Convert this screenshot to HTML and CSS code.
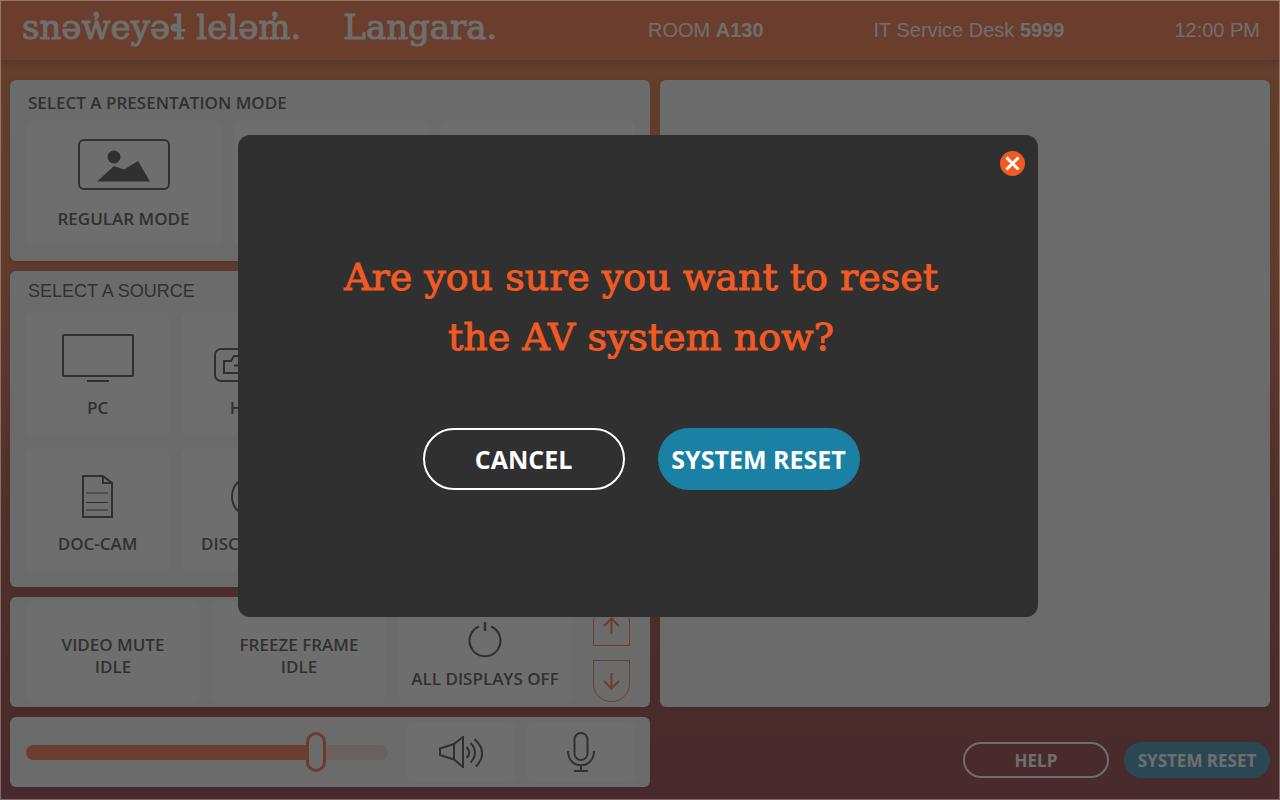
FILE: index.html
```html
<!doctype html>
<html lang="en">

<head>
  <meta charset="utf-8">
  <title>Langara AV Control - Room A130</title>
  <meta name="viewport" content="width=device-width, initial-scale=1.0">
  <link rel="stylesheet" href="styles.css">
</head>

<body>
  <div class="screen">
    <header class="header">
      <div class="brand">
        <span>snəw̓eyəɬ leləm̓.</span>
        <span>Langara.</span>
      </div>
      <div class="info">
        <span>ROOM <b>A130</b></span>
        <span>IT Service Desk <b>5999</b></span>
        <span>12:00 PM</span>
      </div>
    </header>

    <main class="main">
      <section class="panel modes">
        <h2 class="heading">SELECT A PRESENTATION MODE</h2>
        <div class="tiles tiles_3">
          <button class="tile tile_mode">
            <svg width="92" height="52" viewBox="0 0 92 52">
              <rect x="1" y="2" width="90" height="49" rx="5" fill="none" stroke="#303030" stroke-width="2"/>
              <circle cx="36" cy="19" r="6.5" fill="#303030"/>
              <path d="M19 43.500 L36 28 L46 31.500 L60 23 L72 43.500 Z" fill="#303030"/>
            </svg>
            REGULAR MODE
          </button>
          <div class="tile tile_mode"></div>
          <div class="tile tile_mode"></div>
        </div>
      </section>

      <section class="panel sources">
        <h2 class="heading heading_alt">SELECT A SOURCE</h2>
        <div class="tiles tiles_4">
          <button class="tile tile_source">
            <svg width="72" height="49" viewBox="0 0 72 49" fill="none" stroke="#303030" stroke-width="2">
              <rect x="1" y="2" width="70" height="41" rx="1"/>
              <path d="M25 48 H47"/>
            </svg>
            PC
          </button>
          <button class="tile tile_source">
            <svg width="78" height="34" viewBox="0 0 78 34" fill="none" stroke="#303030" stroke-width="2">
              <rect x="1" y="1" width="76" height="32" rx="6"/>
              <path d="M10 25 V13 H17 L20 8 H58 L61 13 H68 V25 Z M20 17.500 H58"/>
            </svg>
            HDMI
          </button>
          <div class="tile tile_source"></div>
          <div class="tile tile_source"></div>
          <button class="tile tile_source">
            <svg width="31" height="43" viewBox="0 0 31 43" fill="none" stroke="#303030" stroke-width="2">
              <path d="M1 1 H21 L30 8 V42 H1 Z M21 1 V8 H30"/>
              <path d="M4 18 H26 M4 27.500 H26 M4 35 H26" stroke-width="1"/>
            </svg>
            DOC-CAM
          </button>
          <button class="tile tile_source">
            <svg width="43" height="43" viewBox="0 0 43 43" fill="none" stroke="#303030" stroke-width="2">
              <circle cx="21.500" cy="21.500" r="20.500"/>
              <circle cx="21.500" cy="21.500" r="6"/>
            </svg>
            DISC PLAYER
          </button>
          <div class="tile tile_source"></div>
          <div class="tile tile_source"></div>
        </div>
      </section>

      <section class="panel display">
        <div class="tiles tiles_3">
          <button class="tile tile_display">VIDEO MUTE<br>IDLE</button>
          <button class="tile tile_display">FREEZE FRAME<br>IDLE</button>
          <button class="tile tile_display">
            <svg width="34" height="36" viewBox="0 0 34 36" fill="none" stroke="#303030" stroke-width="2">
              <path d="M11 4.500 A15.500 15.500 0 1 0 23 4.500"/>
              <path d="M17 0 V9" stroke-width="2.500"/>
            </svg>
            ALL DISPLAYS OFF
          </button>
        </div>
        <div class="arrows">
          <button class="arrow arrow_up" aria-label="Screen up">
            <svg width="17" height="17" viewBox="0 0 17 17" fill="none" stroke="#f15a22" stroke-width="2">
              <path d="M8.500 17 V2 M1 9 L8.500 1.500 L16 9"/>
            </svg>
          </button>
          <button class="arrow arrow_down" aria-label="Screen down">
            <svg width="17" height="17" viewBox="0 0 17 17" fill="none" stroke="#f15a22" stroke-width="2">
              <path d="M8.500 0 V15 M1 8 L8.500 15.500 L16 8"/>
            </svg>
          </button>
        </div>
      </section>

      <section class="panel volume">
        <input class="slider" type="range" min="0" max="100" value="82" aria-label="Volume">
        <div class="tiles tiles_2">
          <button class="tile tile_audio" aria-label="Speaker">
            <svg width="44" height="32" viewBox="0 0 44 32" fill="none" stroke="#303030" stroke-width="2">
              <path d="M1 12.500 L15 8 L24 1 V31 L15 23.500 L1 19 Z M15 8 V23.500"/>
              <path d="M27.500 11 Q33 16.500 27.500 22 M31.500 7 Q40.500 16.500 31.500 26.500 M35.500 3 Q50 16.500 37 30.500"/>
            </svg>
          </button>
          <button class="tile tile_audio" aria-label="Microphone">
            <svg width="28" height="40" viewBox="0 0 28 40" fill="none" stroke="#303030" stroke-width="2">
              <rect x="7.500" y="1" width="13" height="27" rx="6.500"/>
              <path d="M1 19 C1 38 27 38 27 19 M14 33 V39 M7 39 H21"/>
            </svg>
          </button>
        </div>
      </section>

      <section class="panel preview"></section>

      <div class="actions">
        <button class="pill pill_outline">HELP</button>
        <button class="pill pill_blue">SYSTEM RESET</button>
      </div>
    </main>
  </div>

  <div class="overlay">
    <div class="modal" role="dialog" aria-modal="true" aria-labelledby="modal_title">
      <button class="close" aria-label="Close">
        <svg width="25" height="25" viewBox="0 0 25 25">
          <circle cx="12.500" cy="12.500" r="12.500" fill="#f15a22"/>
          <path d="M6.500 6.500 L18.500 18.500 M18.500 6.500 L6.500 18.500" stroke="#fff" stroke-width="3"/>
        </svg>
      </button>
      <h1 class="modal_title" id="modal_title">Are you sure you want to reset<br>the AV system now?</h1>
      <div class="modal_actions">
        <button class="pill pill_big pill_outline">CANCEL</button>
        <button class="pill pill_big pill_blue">SYSTEM RESET</button>
      </div>
    </div>
  </div>
</body>

</html>
```
FILE: styles.css
```css
* {
  box-sizing: border-box;
}

body {
  margin: 0;
  font-family: "Open Sans", sans-serif;
  color: #303030;
}

button {
  margin: 0;
  padding: 0;
  border: 0;
  background: none;
  color: inherit;
  font: inherit;
}

svg {
  display: block;
  flex: none;
}

.screen {
  min-height: 100vh;
  background: linear-gradient(#e36322, #d95a24 30%, #a03022 66%, #8c2420 88%, #821c28);
}

/* header */

.header {
  display: flex;
  align-items: center;
  justify-content: space-between;
  height: 60px;
  padding: 0 20px 0 22px;
  background-color: #f15a22;
  box-shadow: 0 3px 8px rgba(0, 0, 0, 0.3);
  color: #fff;
}

.brand {
  display: flex;
  gap: 42px;
  font-family: "DejaVu Serif", serif;
  font-size: 34px;
  line-height: 50px;
  padding-bottom: 6px;
  white-space: nowrap;
  -webkit-text-stroke: 1px #fff;
}

.info {
  display: flex;
  gap: 110px;
  font-family: "Liberation Sans", Arial, sans-serif;
  font-size: 20px;
  white-space: nowrap;
}

/* panels */

.main {
  display: grid;
  grid-template-columns: 64fr 61fr;
  gap: 10px;
  padding: 20px 10px 13px;
}

.panel {
  grid-column: 1;
  border-radius: 6px;
  background-color: #f5f5f5;
  box-shadow: 0 2px 8px rgba(0, 0, 0, 0.2);
}

.modes {
  padding: 12px 15px 17px 16px;
}

.sources {
  padding: 9px 15px 15px 16px;
}

.display {
  display: flex;
  justify-content: space-between;
  padding: 5px 20px 5px 16px;
}

.volume {
  display: flex;
  align-items: center;
  gap: 19px;
  padding: 6px 15px 6px 16px;
}

.preview {
  grid-column: 2;
  grid-row: 1 / 4;
}

.heading {
  margin: 0 2px 8px;
  font-size: 17px;
  font-weight: 600;
  line-height: 22px;
}

.heading_alt {
  margin-bottom: 10px;
  font-family: "Liberation Sans", Arial, sans-serif;
  font-size: 18px;
  font-weight: 400;
}

/* tiles */

.tiles {
  display: grid;
  gap: 12px;
}

.tiles_2 {
  grid-template-columns: 1fr 1fr;
  flex: 228;
}

.tiles_3 {
  grid-template-columns: 1fr 1fr 1fr;
}

.tiles_4 {
  grid-template-columns: 1fr 1fr 1fr 1fr;
}

.display .tiles {
  flex: 0 1 546px;
}

.tile {
  display: flex;
  flex-direction: column;
  align-items: center;
  border-radius: 6px;
  background-color: #fff;
  font-size: 17px;
  font-weight: 600;
  line-height: 22px;
}

.tile_mode {
  justify-content: flex-end;
  gap: 18px;
  height: 122px;
  padding-bottom: 14px;
}

.tile_source {
  justify-content: flex-end;
  gap: 15px;
  height: 124px;
  padding-bottom: 17px;
}

.tile_display {
  justify-content: center;
  gap: 10px;
  height: 100px;
  padding-top: 8px;
}

.tile_audio {
  justify-content: center;
  height: 58px;
}

.arrows {
  display: flex;
  flex-direction: column;
  justify-content: flex-end;
  gap: 14px;
}

.arrow {
  display: flex;
  align-items: center;
  justify-content: center;
  width: 37px;
  height: 42px;
  border: 1px solid #f15a22;
}

.arrow_up {
  border-radius: 18px 18px 0 0;
}

.arrow_down {
  border-radius: 0 0 18px 18px;
}

/* volume slider */

.slider {
  flex: 362;
  min-width: 0;
  height: 40px;
  margin: 0;
  appearance: none;
  background: none;
}

.slider::-webkit-slider-runnable-track {
  height: 15px;
  border-radius: 8px;
  background: linear-gradient(to right, #f15a22 82%, #f0d0c8 82%);
}

.slider::-webkit-slider-thumb {
  appearance: none;
  width: 20px;
  height: 40px;
  margin-top: -13px;
  border: 3px solid #f15a22;
  border-radius: 10px;
  background-color: #f5f5f5;
}

/* buttons */

.actions {
  grid-column: 2;
  display: flex;
  align-items: flex-end;
  justify-content: flex-end;
  gap: 15px;
  padding-bottom: 9px;
}

.pill {
  width: 146px;
  height: 36px;
  border-radius: 18px;
  color: #fff;
  font-size: 17px;
  font-weight: 700;
}

.pill_outline {
  border: 2px solid #fff;
}

.pill_blue {
  background-color: #1b81a4;
}

.pill_big {
  width: 202px;
  height: 62px;
  border-radius: 31px;
  font-size: 25px;
}

/* dialog */

.overlay {
  position: fixed;
  inset: 0;
  display: flex;
  align-items: flex-start;
  justify-content: center;
  padding: 134px 4px 0 0;
  border: 1px solid rgba(255, 255, 255, 0.3);
  background-color: rgba(48, 48, 48, 0.7);
}

.modal {
  position: relative;
  width: 800px;
  max-width: 100%;
  padding: 112px 0 127px 6px;
  border-radius: 12px;
  background-color: #303030;
  text-align: center;
}

.close {
  position: absolute;
  top: 16px;
  right: 13px;
}

.modal_title {
  margin: 0 0 61px;
  color: #f15a22;
  font-family: "DejaVu Serif", serif;
  font-size: 38px;
  font-weight: 400;
  line-height: 60px;
  -webkit-text-stroke: 1px #f15a22;
}

.modal_actions {
  display: flex;
  justify-content: center;
  gap: 33px;
}
```
